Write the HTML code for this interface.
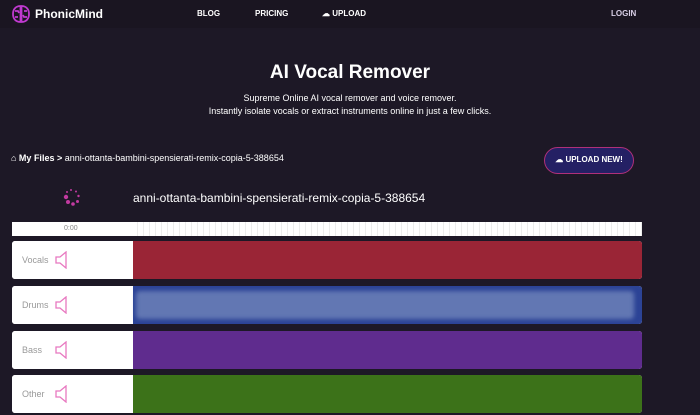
<!DOCTYPE html>
<html><head><style>
body{margin:0;width:700px;height:415px;overflow:hidden;background:#1d1826;font-family:"Liberation Sans",sans-serif;color:#fff;position:relative}
.a{position:absolute}
.nav{font-size:8px;font-weight:bold;top:9px}
.row{position:absolute;left:12px;width:630px;height:38px;border-radius:3px;overflow:hidden;background:#fff}
.row .l{position:absolute;left:0;top:0;width:121px;height:100%;background:#fff;color:#999;font-size:9px}
.row .l span{position:absolute;left:10px;top:14px}
.row .c{position:absolute;left:121px;top:0;right:0;height:100%}
.row svg{position:absolute;left:43px;top:10px}
</style></head><body>
<div class="a" style="left:0;top:0;width:700px;height:28px;background:#1a1521"></div>
<svg class="a" style="left:11px;top:4px" width="20" height="20" viewBox="0 0 20 20"><g fill="none" stroke="#c03ad0" stroke-width="1.8"><path d="M9.5 2C5 2 2 5 2 10s3 8 7.5 8zM10.5 2c4.5 0 7.5 3 7.5 8s-3 8-7.5 8z"/><path d="M4 7h3l1 2M4 13h3M16 7h-3M16 13h-3l-1-2"/></g></svg>
<div class="a" style="left:35px;top:7px;font-size:12px;font-weight:bold">PhonicMind</div>
<div class="a nav" style="left:197px">BLOG</div>
<div class="a nav" style="left:255px">PRICING</div>
<div class="a nav" style="left:322px">☁ UPLOAD</div>
<div class="a nav" style="left:611px;color:#d8cfe6">LOGIN</div>
<div class="a" style="left:0;width:700px;top:62px;text-align:center;font-size:19px;font-weight:bold">AI Vocal Remover</div>
<div class="a" style="left:0;width:700px;top:92px;text-align:center;font-size:9px;line-height:13px">Supreme Online AI vocal remover and voice remover.<br>Instantly isolate vocals or extract instruments online in just a few clicks.</div>
<div class="a" style="left:11px;top:153px;font-size:9px"><b>⌂ My Files &gt;</b> anni-ottanta-bambini-spensierati-remix-copia-5-388654</div>
<div class="a" style="left:544px;top:147px;width:90px;height:27px;box-sizing:border-box;border:1.5px solid #b0307a;border-radius:14px;background:#242064;font-size:8px;font-weight:bold;text-align:center;line-height:24px">☁ UPLOAD NEW!</div>
<svg class="a" style="left:62px;top:187px" width="20" height="20"><g fill="#c23aa0"><circle cx="4" cy="10" r="2.2"/><circle cx="6" cy="15" r="2"/><circle cx="11" cy="17" r="1.8"/><circle cx="15.5" cy="14.5" r="1.5"/><circle cx="16.5" cy="9" r="1.2"/><circle cx="14" cy="4.5" r="1"/><circle cx="9" cy="3" r="1"/><circle cx="5" cy="5" r="1"/></g></svg>
<div class="a" style="left:133px;top:191px;font-size:12px">anni-ottanta-bambini-spensierati-remix-copia-5-388654</div>
<div class="a" style="left:12px;top:222px;width:630px;height:14px;background:repeating-linear-gradient(90deg,#fff 0 5px,#ececec 5px 6px)"></div>
<div class="a" style="left:12px;top:222px;width:121px;height:14px;background:#fff;color:#888;font-size:7px"><span style="position:absolute;left:52px;top:3px">0:00</span></div>
<div class="row" style="top:241px"><div class="l"><span>Vocals</span><svg width="12" height="18"><path d="M1 6h4l6-5v16l-6-5H1z" fill="none" stroke="#e878c0" stroke-width="1.3"/></svg></div><div class="c" style="background:#9a2536"></div></div>
<div class="row" style="top:286px"><div class="l"><span>Drums</span><svg width="12" height="18"><path d="M1 6h4l6-5v16l-6-5H1z" fill="none" stroke="#e878c0" stroke-width="1.3"/></svg></div><div class="c" style="background:#2c4396"><div style="position:absolute;left:3px;right:8px;top:5px;bottom:5px;background:#6277b3;filter:blur(2px);border-radius:4px"></div></div></div>
<div class="row" style="top:331px"><div class="l"><span>Bass</span><svg width="12" height="18"><path d="M1 6h4l6-5v16l-6-5H1z" fill="none" stroke="#e878c0" stroke-width="1.3"/></svg></div><div class="c" style="background:#5f2c8e"></div></div>
<div class="row" style="top:375px"><div class="l"><span>Other</span><svg width="12" height="18"><path d="M1 6h4l6-5v16l-6-5H1z" fill="none" stroke="#e878c0" stroke-width="1.3"/></svg></div><div class="c" style="background:#3c7219"></div></div>
</body></html>
